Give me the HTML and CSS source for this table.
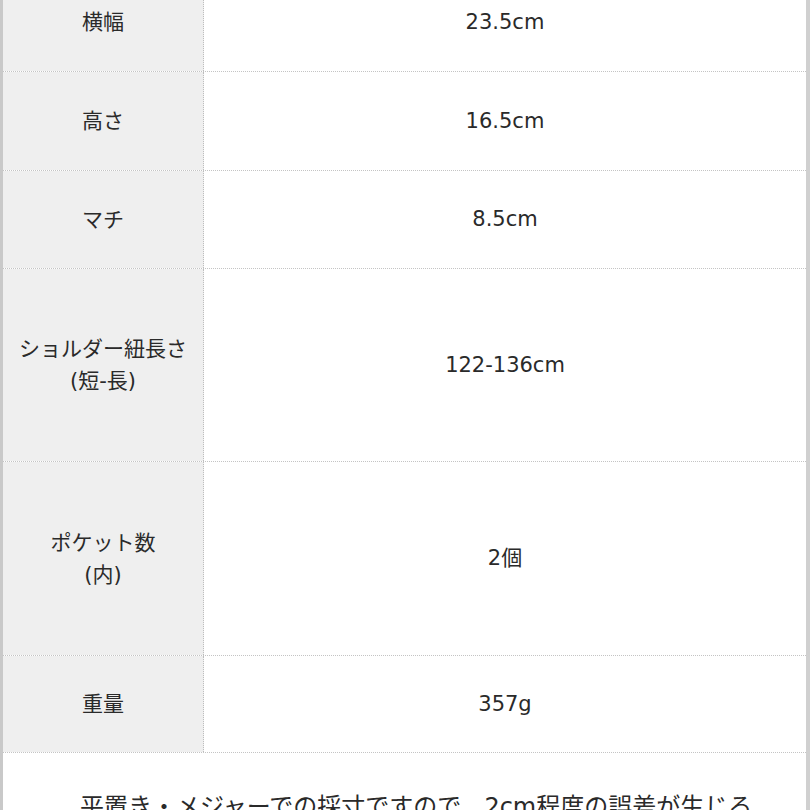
FILE: index.html
```html
<!DOCTYPE html>
<html lang="ja">
<head>
<meta charset="utf-8">
<link rel="stylesheet" href="styles.css">
</head>
<body>
<div class="frame">
  <div class="spec">
    <div class="row r1"><div class="th">横幅</div><div class="td">23.5cm</div></div>
    <div class="row r2"><div class="th">高さ</div><div class="td">16.5cm</div></div>
    <div class="row r3"><div class="th">マチ</div><div class="td">8.5cm</div></div>
    <div class="row r4"><div class="th">ショルダー紐長さ<br>(短-長)</div><div class="td">122-136cm</div></div>
    <div class="row r5"><div class="th">ポケット数<br>(内)</div><div class="td">2個</div></div>
    <div class="row r6"><div class="th">重量</div><div class="td">357g</div></div>
  </div>
  <p class="note">平置き・メジャーでの採寸ですので、2cm程度の誤差が生じる場合があります。</p>
</div>
</body>
</html>
```

FILE: styles.css
```css
html, body {
  margin: 0;
  padding: 0;
  background: #ffffff;
  overflow: hidden;
}
body {
  width: 810px;
  height: 810px;
  font-family: "DejaVu Sans", "Noto Sans CJK JP", sans-serif;
  color: #2a2a2a;
}
.frame {
  margin-top: -27px;
  width: 810px;
  box-sizing: border-box;
  border-left: 3px solid #c9c9c9;
  border-right: 4px solid #d0d0d0;
  min-height: 900px;
}
.spec {
  display: flex;
  flex-direction: column;
}
.row {
  display: flex;
  border-bottom: 1px dotted #c4c4c4;
}
.r1 { height: 98px; }
.r2 { height: 98px; }
.r3 { height: 97px; }
.r4 { height: 192px; }
.r5 { height: 193px; }
.r6 { height: 96px; }
.th {
  width: 200px;
  flex: none;
  background: #efefef;
  border-right: 1px dotted #bdbdbd;
  display: flex;
  align-items: center;
  justify-content: center;
  text-align: center;
  font-size: 21px;
  line-height: 32px;
}
.td {
  flex: 1;
  display: flex;
  align-items: center;
  justify-content: center;
  font-size: 21px;
  line-height: 32px;
  padding-bottom: 1px;
}
.note {
  margin: 0;
  padding: 36px 46px 0 77px;
  font-size: 24px;
  line-height: 36px;
}
```
